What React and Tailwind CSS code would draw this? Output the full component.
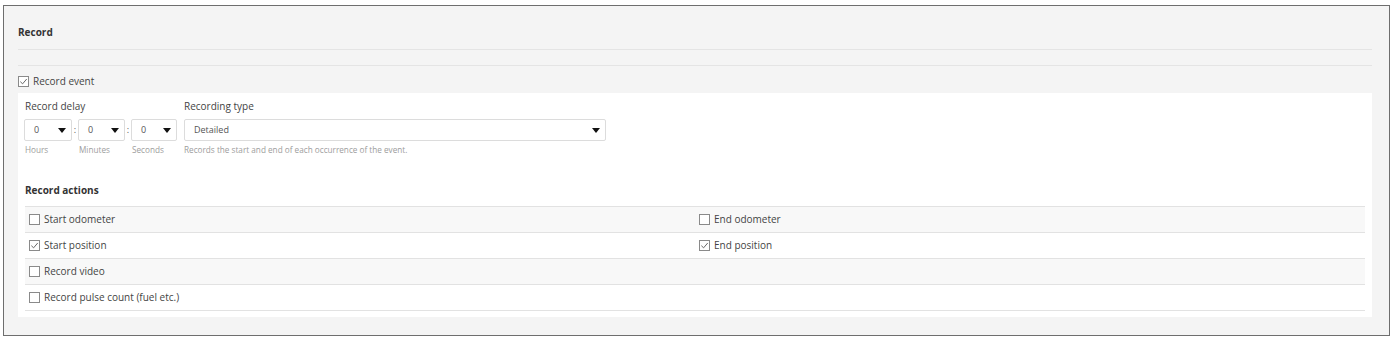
import React from "react";

function Checkbox({ checked }) {
  return (
    <span className="inline-flex h-[11px] w-[11px] shrink-0 items-center justify-center border border-[#8a8a8a] bg-white">
      {checked && (
        <svg viewBox="0 0 10 10" className="h-[9px] w-[9px]">
          <path d="M1.5 5.2 L4 7.6 L8.6 2.2" fill="none" stroke="#666" strokeWidth="1.1" />
        </svg>
      )}
    </span>
  );
}

function Caret() {
  return (
    <svg viewBox="0 0 8 5" className="h-[5px] w-[8px]">
      <path d="M0 0 H8 L4 5 Z" fill="#111" />
    </svg>
  );
}

function Select({ value, className }) {
  return (
    <div
      className={
        "flex h-[22px] items-center justify-between rounded-[2px] border border-[#dcdcdc] bg-white pl-[9px] pr-[5px] text-[9px] text-[#555] " +
        className
      }
    >
      <span>{value}</span>
      <Caret />
    </div>
  );
}

const actions = [
  [{ label: "Start odometer", checked: false }, { label: "End odometer", checked: false }],
  [{ label: "Start position", checked: true }, { label: "End position", checked: true }],
  [{ label: "Record video", checked: false }, null],
  [{ label: "Record pulse count (fuel etc.)", checked: false }, null],
];

export default function App() {
  return (
    <div className="h-[339px] w-[1395px] bg-white pl-[3px] pt-[5px] font-['Open_Sans',sans-serif]">
      <div className="h-[331px] w-[1387px] border border-[#6e6e6e] bg-[#f4f4f4] pl-[14px] pr-[17px]">
        <div className="border-b border-[#e4e4e4] pb-[10px] pt-[19px] text-[10px] font-bold leading-[14px] text-[#333]">
          Record
        </div>
        <div className="h-[16px] border-b border-[#e4e4e4]" />
        <div className="flex h-[27px] items-center gap-[4px] pt-[4px] text-[10px] text-[#444]">
          <Checkbox checked />
          <span>Record event</span>
        </div>

        <div className="bg-white px-[7px] pb-[6px]">
          <div className="flex gap-[7px] pt-[6px]">
            <div>
              <div className="text-[10px] leading-[14px] text-[#444]">Record delay</div>
              <div className="mt-[6px] grid grid-cols-[47px_6px_47px_6px_46px]">
                <Select value="0" className="-ml-px" />
                <div className="flex h-[22px] items-center justify-center text-[9px] text-[#555]">:</div>
                <Select value="0" />
                <div className="flex h-[22px] items-center justify-center text-[9px] text-[#555]">:</div>
                <Select value="0" />
                <div className="mt-[3px] text-[8.2px] leading-[12px] text-[#9d9d9d]">Hours</div>
                <div />
                <div className="mt-[3px] pl-px text-[8.2px] leading-[12px] text-[#9d9d9d]">Minutes</div>
                <div />
                <div className="mt-[3px] pl-px text-[8.2px] leading-[12px] text-[#9d9d9d]">Seconds</div>
              </div>
            </div>
            <div>
              <div className="text-[10px] leading-[14px] text-[#444]">Recording type</div>
              <Select value="Detailed" className="mt-[6px] w-[422px]" />
              <div className="mt-[3px] text-[8.2px] leading-[12px] text-[#9d9d9d]">
                Records the start and end of each occurrence of the event.
              </div>
            </div>
          </div>

          <div className="mt-[27px] text-[10px] font-bold leading-[14px] text-[#333]">Record actions</div>

          <div className="mt-[9px] border-t border-[#e2e2e2]">
            {actions.map((row, i) => (
              <div
                key={i}
                className={
                  "grid h-[26px] grid-cols-2 border-b border-[#e2e2e2] " +
                  (i % 2 === 0 ? "bg-[#f8f8f8]" : "bg-white")
                }
              >
                {row.map((cell, j) => (
                  <div key={j} className="flex items-center gap-[4px] px-[4px] pb-px text-[10px] text-[#444]">
                    {cell && (
                      <>
                        <Checkbox checked={cell.checked} />
                        <span>{cell.label}</span>
                      </>
                    )}
                  </div>
                ))}
              </div>
            ))}
          </div>
        </div>
      </div>
    </div>
  );
}
